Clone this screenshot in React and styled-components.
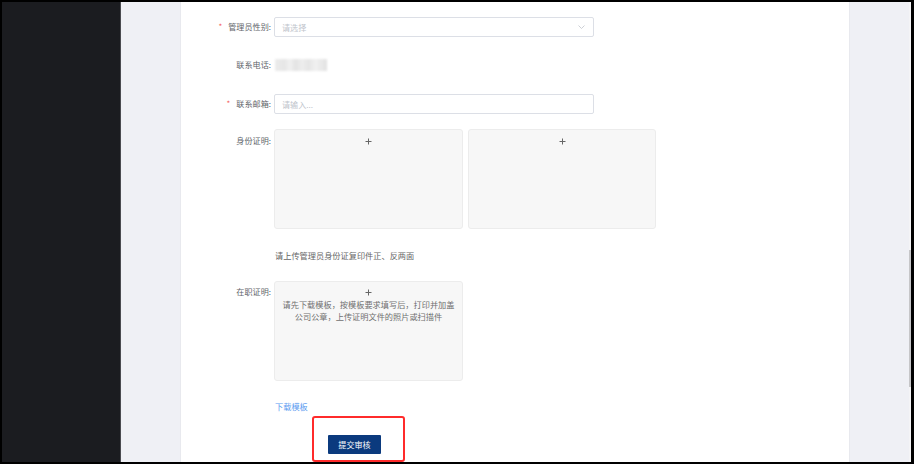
import React from "react";
import styled, { createGlobalStyle } from "styled-components";

const Global = createGlobalStyle`
  html, body { margin: 0; padding: 0; background: #000; }
  body { font-family: "Noto Sans CJK SC", "Noto Sans", sans-serif; }
  * { box-sizing: border-box; }
`;

const Frame = styled.div`
  width: 914px;
  height: 464px;
  background: #000;
  padding: 2px 3px 2px 2px;
`;

const Screen = styled.div`
  display: flex;
  height: 460px;
  overflow: hidden;
`;

const Sidebar = styled.div`
  width: 119px;
  flex: none;
  background: #1b1c20;
  border-right: 1px solid #4a4b50;
`;

const Gutter = styled.div`
  width: 60px;
  flex: none;
  background: #eff0f5;
  border-${(p) => (p.$side === "left" ? "right" : "left")}: 1px solid #e8e9ee;
`;

const Content = styled.div`
  width: 668px;
  flex: none;
  background: #fff;
  padding-top: 15px;
  display: flex;
  flex-direction: column;
`;

const ScrollTrack = styled.div`
  width: 2px;
  flex: none;
  background: #f4f4f6;
  display: flex;
  flex-direction: column;
  padding-top: 248px;
`;

const ScrollThumb = styled.div`
  height: 137px;
  background: #c6c6c8;
`;

const FormItem = styled.div`
  display: flex;
  align-items: flex-start;
  margin-bottom: ${(p) => p.$mb || 0}px;
`;

const Label = styled.div`
  width: 90px;
  margin-right: 3px;
  flex: none;
  text-align: right;
  font-size: 8.1px;
  line-height: 20px;
  color: #62656b;
  padding-top: ${(p) => p.$pt || 0}px;
  white-space: nowrap;
`;

const Star = styled.span`
  color: #f56c6c;
  margin-right: 6px;
`;

const Field = styled.div`
  width: 320px;
  height: 20px;
  border: 1px solid #dcdfe6;
  border-radius: 2px;
  display: flex;
  align-items: center;
  justify-content: space-between;
  padding: 0 8px 0 7px;
  font-size: 8.1px;
  color: #c0c4cc;
  background: #fff;
`;

const Blur = styled.div`
  width: 52px;
  height: 12px;
  margin-top: 4px;
  margin-left: 1px;
  background: linear-gradient(
    90deg,
    #ececec 0%,
    #e6e6e6 18%,
    #f1f1f1 28%,
    #e3e3e3 40%,
    #eeeeee 52%,
    #e5e5e5 64%,
    #f0f0f0 78%,
    #e2e2e2 100%
  );
  filter: blur(0.8px);
`;

const Uploads = styled.div`
  display: flex;
  gap: 5px;
`;

const UploadBox = styled.div`
  width: ${(p) => p.$w || 189}px;
  height: 100px;
  background: #f7f7f7;
  border: 1px solid #ececec;
  border-radius: 3px;
  display: flex;
  flex-direction: column;
  align-items: center;
  padding-top: ${(p) => p.$pt || 8}px;
`;

const UploadText = styled.div`
  margin-top: 3px;
  font-size: 8.2px;
  line-height: 11.5px;
  color: #707070;
  text-align: center;
  white-space: nowrap;
`;

const Indent = styled.div`
  margin-left: ${(p) => p.$ml || 94}px;
  margin-bottom: ${(p) => p.$mb || 0}px;
  font-size: 8.2px;
  line-height: 12px;
  color: ${(p) => p.$color || "#666"};
`;

const Annotation = styled.div`
  margin-left: 131px;
  width: 93px;
  height: 60px;
  border: 2px solid #ff2b2b;
  border-radius: 3px;
  padding: 17px 0 0 14px;
`;

const SubmitButton = styled.button`
  width: 53px;
  height: 19px;
  border: none;
  border-radius: 1px;
  background: #0b3a7e;
  color: #fff;
  font-family: inherit;
  font-size: 8.1px;
  padding: 0;
  display: flex;
  align-items: center;
  justify-content: center;
`;

const PlusIcon = () => (
  <svg width="7" height="7" viewBox="0 0 7 7">
    <path d="M3.5 0.5v6M0.5 3.5h6" stroke="#666" strokeWidth="1" />
  </svg>
);

const Chevron = () => (
  <svg width="7" height="4" viewBox="0 0 7 4">
    <polyline points="0.5,0.5 3.5,3.5 6.5,0.5" fill="none" stroke="#c0c4cc" strokeWidth="0.8" />
  </svg>
);

export default function App() {
  return (
    <>
      <Global />
      <Frame>
        <Screen>
          <Sidebar />
          <Gutter $side="left" />
          <Content>
            <FormItem $mb={18}>
              <Label>
                <Star>*</Star>管理员性别:
              </Label>
              <Field>
                <span>请选择</span>
                <Chevron />
              </Field>
            </FormItem>
            <FormItem $mb={19}>
              <Label>联系电话:</Label>
              <Blur />
            </FormItem>
            <FormItem $mb={15}>
              <Label>
                <Star>*</Star>联系邮箱:
              </Label>
              <Field>
                <span>请输入...</span>
              </Field>
            </FormItem>
            <FormItem $mb={20}>
              <Label $pt={2}>身份证明:</Label>
              <Uploads>
                <UploadBox $w={189}>
                  <PlusIcon />
                </UploadBox>
                <UploadBox $w={188}>
                  <PlusIcon />
                </UploadBox>
              </Uploads>
            </FormItem>
            <Indent $mb={20}>请上传管理员身份证复印件正、反两面</Indent>
            <FormItem $mb={19}>
              <Label $pt={1}>在职证明:</Label>
              <UploadBox $w={189} $pt={7}>
                <PlusIcon />
                <UploadText>
                  请先下载模板，按模板要求填写后，打印并加盖
                  <br />
                  公司公章，上传证明文件的照片或扫描件
                </UploadText>
              </UploadBox>
            </FormItem>
            <Indent $mb={4} $color="#5b9bf0">下载模板</Indent>
            <Annotation>
              <SubmitButton>提交审核</SubmitButton>
            </Annotation>
          </Content>
          <Gutter $side="right" />
          <ScrollTrack>
            <ScrollThumb />
          </ScrollTrack>
        </Screen>
      </Frame>
    </>
  );
}
